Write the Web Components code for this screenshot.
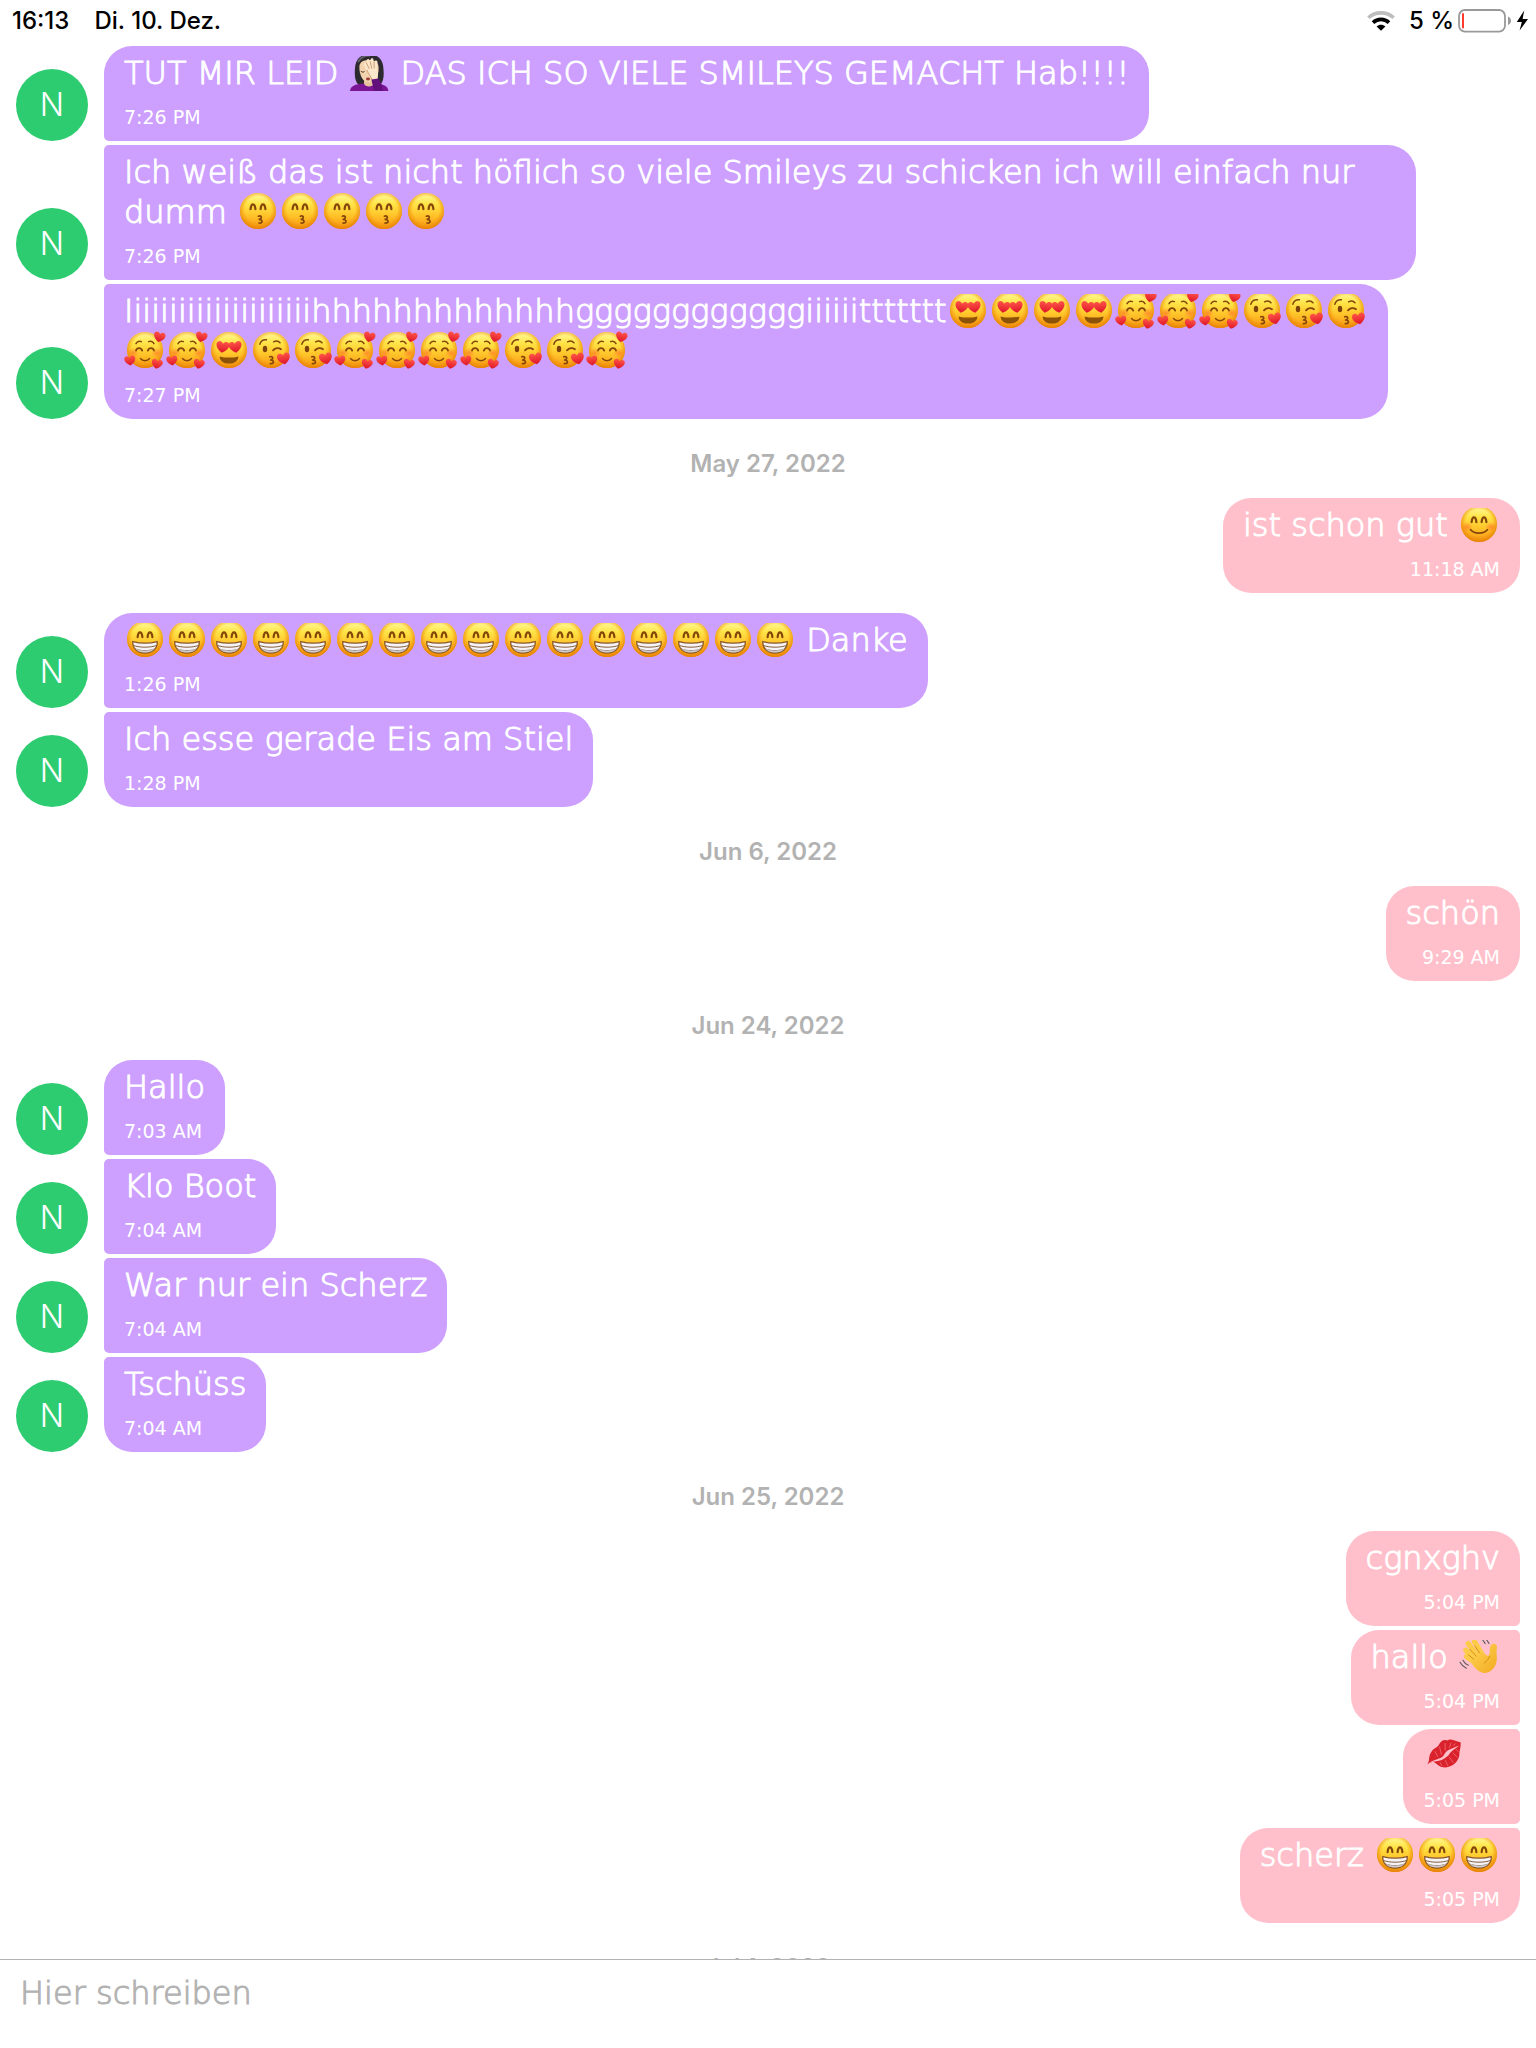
<!DOCTYPE html>
<html lang="de">
<head>
<meta charset="utf-8">
<meta name="viewport" content="width=device-width, initial-scale=1">
<title>Chat</title>
<style>
  body { margin: 0; background: #fff; }
</style>
</head>
<body>
<chat-app></chat-app>

<script>
const FACE = `
  <defs>
    <linearGradient id="g" x1="0" y1="0" x2="0" y2="1">
      <stop offset="0" stop-color="#fffba0"/><stop offset=".3" stop-color="#ffe548"/>
      <stop offset=".62" stop-color="#ffc42a"/><stop offset="1" stop-color="#f79412"/>
    </linearGradient>
    <radialGradient id="r" cx=".5" cy=".46" r=".54">
      <stop offset=".66" stop-color="#f59a10" stop-opacity="0"/><stop offset="1" stop-color="#e58006" stop-opacity=".95"/>
    </radialGradient>
    <radialGradient id="c"><stop offset="0" stop-color="#ff6a2a" stop-opacity=".6"/><stop offset="1" stop-color="#ff6a2a" stop-opacity="0"/></radialGradient>
    <linearGradient id="h" x1="0" y1="0" x2="0" y2="1"><stop offset="0" stop-color="#ff5548"/><stop offset="1" stop-color="#dd1428"/></linearGradient>
  </defs>
  <circle cx="21" cy="18" r="18" fill="url(#g)"/><circle cx="21" cy="18" r="18" fill="url(#r)"/>`;
const line = (d, w = 2.2) => `<path d="${d}" fill="none" stroke="#84460a" stroke-width="${w}" stroke-linecap="round" stroke-linejoin="round"/>`;
const heart = (x, y, s, a = 0) =>
  `<path transform="translate(${x} ${y}) rotate(${a}) scale(${s})" fill="url(#h)" d="M0 5.4C-4 3-6 .6-6-2-6-5.6-1.6-6.4 0-3 1.6-6.4 6-5.6 6-2 6 .6 4 3 0 5.4Z"/>`;
const CHEEKS = `<ellipse cx="9" cy="21" rx="6" ry="5" fill="url(#c)"/><ellipse cx="33" cy="21" rx="6" ry="5" fill="url(#c)"/>`;
const ARCS = line('M13.6 16.2C14.2 9.8 17.8 9.8 18.4 16.2') + line('M23.6 16.2C24.2 9.8 27.8 9.8 28.4 16.2');
const KISS = line('M21.4 23.2C24.6 22 25.6 25.6 22.2 26.4 26 26.4 26 30.6 22 30', 1.7);

const EMOJI = {
  grin: ['😁', FACE + ARCS +
    `<path d="M8.8 20.6C16 22.4 26 22.4 33.2 20.6 33.8 27 28.6 32 21 32S8.2 27 8.8 20.6Z" fill="#f4f3f7" stroke="#8a5522" stroke-width="1.3"/>
     <path d="M9.2 24.4C16 26.8 26 26.8 32.8 24.4M11.4 28C17 30.2 25 30.2 30.6 28" fill="none" stroke="#8a5f3c" stroke-width="1"/>
     <path d="M11.2 27.6C16 30 26 30 30.8 27.6 28.6 30.6 25.4 31.6 21 31.6S13.4 30.6 11.2 27.6Z" fill="#c9c8ce" opacity=".8"/>`],
  blush: ['😊', FACE + CHEEKS + ARCS + line('M12.6 23.8C16 28.2 26 28.2 29.4 23.8', 1.8)],
  kissing: ['😙', FACE + ARCS + KISS],
  hearteyes: ['😍', FACE + heart(14.6, 15, 1.08, 8) + heart(27.4, 15, 1.08, -8) +
    `<path d="M11.6 24.4C17 26 25 26 30.4 24.4 30.4 28.6 26.4 31.6 21 31.6S11.6 28.6 11.6 24.4Z" fill="#8c5208"/>`],
  loving: ['🥰', FACE + CHEEKS + line('M12 18.6C13 15.4 17 15.4 18.2 18.6', 1.8) + line('M23.8 18.6C25 15.4 29 15.4 30 18.6', 1.8) +
    line('M12 11.6C13 9.6 15.4 9 17.4 9.6', 1.5) + line('M24.6 9.6C26.6 9 29 9.6 30 11.6', 1.5) + line('M16.6 26.6C18.6 29.4 23.4 29.4 25.4 26.6', 1.6) +
    heart(35.4, 5, .96, 14) + heart(6, 28.6, .92, -8) + heart(33, 32, .92, 12)],
  kissheart: ['😘', FACE + `<ellipse cx="15" cy="17" rx="2.2" ry="3.3" fill="#7c430a"/>` +
    line('M9.8 12.2C11 8.6 13.6 7.4 16.4 7.8', 1.5) + line('M23.6 9.8C26 8.6 28.6 9 30 10.8', 1.5) + line('M23 18.4C25.2 15.8 28.6 15.6 31 17.2', 1.8) +
    `<g transform="translate(-1.6 1.6)">${KISS}</g>` + heart(33.8, 26.6, 1.08, -12)],
  wave: ['👋', `
    <defs><linearGradient id="w" x1="0" y1="0" x2="1" y2="1"><stop offset="0" stop-color="#ffd75a"/><stop offset="1" stop-color="#f3a91e"/></linearGradient></defs>
    <g fill="none" stroke="#fccb48" stroke-width="5.2" stroke-linecap="round">
      <path d="M24 16 16.4 3.6"/><path d="M21 20 10.2 5.6"/><path d="M19 23 7.6 12.2"/><path d="M19 26 8.6 18.6"/>
    </g>
    <path d="M25.6 14.6C30 20 31.6 18 31.8 13 31.8 9.4 32.4 6 35.6 5.8 38.4 5.8 39.4 8 38.8 11 37.8 15.4 39.8 19.6 38.2 25 36.6 31 30.6 36 24.8 34.8 19.4 33.6 14.2 27.4 12.4 22.6L18 14Z" fill="url(#w)"/>
    <path d="M21.6 15 16.6 7.6M18.4 18.4 11.6 11M16 21.4 10 16.6M31.8 18C30.8 21 28.6 22 26.4 25.6" fill="none" stroke="#d88f14" stroke-width="1"/>
    <path d="M24 .8 27.2 5.6M27.4 0 31 5.4M2 24.2C3.6 27.2 5.6 29 8.4 30.2M5 22.2C6 24.4 8 26.4 10.4 27.2" fill="none" stroke="#5c5c62" stroke-width="1.1" stroke-linecap="round"/>`],
  lips: ['💋', `
    <path d="M4 27.4C7.6 23 4.6 20 8.6 14.4 12 10 14 11.4 16 7.6 17.6 3.6 21.6 1.8 24.4 3.6 27 .8 31.6 4 37.6 5.2 38.2 11 36 13.6 36.4 18 35.4 25 29 30 22.6 30.4 17 30.6 14.8 27.6 11.4 25.2 8.8 24.4 6.6 26 4 27.4Z" fill="#d9222c"/>
    <path d="M4.6 27C10 22.6 14 22.6 18.4 20.4 21.6 19 21 15.6 25 13.2 28.6 11.6 33 9.4 36.4 8.4 32.6 11.4 29.6 13 27.2 15.8 25.2 19.6 22.6 20.6 19.6 22.6 16 24.8 11.4 23.4 4.6 27Z" fill="#ffc0cb"/>
    <path d="M12 14.6 14.8 19.6M16.6 10 18.4 17.4M22 6.4 22.2 13.2M28 6.2 26.4 10.6M32 6.8 30.8 8.8M17 25.4 19 28.6M22.4 23.6 24.6 28.4M26.4 20.2 30.2 25.4M30 16 34 20M33 12.4 35 14.4" fill="none" stroke="#ee6670" stroke-width=".9" stroke-linecap="round"/>`],
  facepalm: ['🤦🏻‍♀️', `
    <path d="M11 31C6 28 6.4 17 7.4 11 8.8 3.6 14 .4 21 .4S33.6 3.6 35 11C36 18 36.6 27 32 31Z" fill="#2c2a2f"/>
    <path d="M10 8C13 3 17 1.4 22 1.6" fill="none" stroke="#66626a" stroke-width="2"/>
    <path d="M2 37C2.6 31.6 8 30.6 14 29.6L28 29.4C35 30.4 40 31.4 40.4 37Z" fill="#7c1496"/>
    <path d="M16 24H26V29.6C25 33.4 17 33.4 16 29.6Z" fill="#e6c19c"/>
    <path d="M11.4 12C12 8 15 6 21 6S30 8 30.6 13C31 22 27 28.4 21 28.4S11 21.4 11.4 12Z" fill="#f3d3ae"/>
    <path d="M12.8 17.2C14.4 18.4 15.6 18.4 16.6 17.4" fill="none" stroke="#4a3226" stroke-width="1"/>
    <ellipse cx="20" cy="25" rx="2" ry="1.4" fill="#a13a34"/>
    <path d="M17 10 20 16M20 6.6 22.4 15M24 5.8 25 14.6M28 8 27.6 15" fill="none" stroke="#fae6ca" stroke-width="3" stroke-linecap="round"/>
    <path d="M18.6 14C21 13 27 13 29 14.4 31 18 29.6 25 29 29L24 28C24 23 19 20 18.6 14Z" fill="#fae6ca"/>
    <path d="M18.4 9 21.4 15M22.2 7.6 23.8 14.6M26 7.6 26.2 14.4M19 16C20 20 23.4 22.4 24 26" fill="none" stroke="#c8966c" stroke-width=".9"/>
    <path d="M23.4 25.6 30.6 24.6C33 29 35 32 35 37H25.6C25.6 33 24 29 23.4 25.6Z" fill="#63107c"/>`]
};

customElements.define('emoji-icon', class extends HTMLElement {
  connectedCallback() {
    const [label, art] = EMOJI[this.getAttribute('name')];
    this.attachShadow({ mode: 'open' }).innerHTML = `
      <style>
        :host { display: inline-block; width: 42px; height: 36px; vertical-align: -6px; line-height: 0; }
        svg { display: block; width: 42px; height: 36px; overflow: visible; }
      </style>
      <svg viewBox="0 0 42 36" role="img" aria-label="${label}">${art}</svg>`;
  }
});

customElements.define('status-bar', class extends HTMLElement {
  connectedCallback() {
    this.attachShadow({ mode: 'open' }).innerHTML = `
      <style>
        :host { display: flex; justify-content: space-between; align-items: center; padding: 0 7px 4px 12px;
                box-sizing: border-box; height: 46px; font: 500 24px/30px Inter, sans-serif; color: #000; }
        div { display: flex; align-items: center; }
        .left { gap: 25px; }
        .battery { margin-left: 4px; }
        .wifi { margin-right: 14px; }
        svg { display: block; }
      </style>
      <div class="left"><time>16:13</time><span>Di. 10. Dez.</span></div>
      <div>
        <svg class="wifi" width="28" height="20" viewBox="0 0 28 20" aria-hidden="true">
          <path d="M1.4 6.8C8.4.2 19.6.2 26.6 6.8" fill="none" stroke="#bdbdbd" stroke-width="3.6"/>
          <path d="M6 11.6C10.6 7.4 17.4 7.4 22 11.6" fill="none" stroke="#000" stroke-width="3.8"/>
          <path d="M9.6 15.4C12.2 13.2 15.8 13.2 18.4 15.4L14 19.8Z" fill="#000"/>
        </svg>
        <span>5 %</span>
        <svg class="battery" width="71" height="24" viewBox="0 0 71 24" aria-hidden="true">
          <rect x="1" y="1" width="46" height="21.6" rx="6" fill="none" stroke="#999" stroke-width="1.8"/>
          <rect x="4" y="4" width="2" height="15.6" rx="1" fill="#ff3b30"/>
          <path d="M50 7.6C52 8.4 53 10 53 11.8S52 15.2 50 16Z" fill="#999"/>
          <path d="M66.2 1.4 58.8 13H63.8L61.6 21.6 70 10H64.6Z" fill="#000"/>
        </svg>
      </div>`;
  }
});

customElements.define('user-avatar', class extends HTMLElement {
  connectedCallback() {
    this.attachShadow({ mode: 'open' }).innerHTML = `
      <style>
        :host { display: flex; flex: none; align-items: center; justify-content: center; width: 72px; height: 72px;
                border-radius: 50%; background: #2ecc71; color: #fff; font: 300 32px/40px Inter, sans-serif; }
      </style>
      <slot></slot>`;
  }
});

customElements.define('chat-message', class extends HTMLElement {
  connectedCallback() {
    const mine = this.hasAttribute('mine');
    this.attachShadow({ mode: 'open' }).innerHTML = `
      <style>
        :host { display: flex; align-items: flex-end; gap: 16px; padding: 0 16px; }
        :host([mine]) { justify-content: flex-end; }
        .bubble { box-sizing: border-box; max-width: 1312px; padding: 7px 20px 12px; color: #fff; background: #cd9fff;
                  border-radius: var(--tl, 5px) 28px 28px var(--bl, 5px);
                  font: 200 32px/40px "Chalkboard SE", "DejaVu Sans", sans-serif; -webkit-text-stroke: 1px #fff; }
        :host([mine]) .bubble { background: #ffc0cb; border-radius: 28px var(--tl, 5px) var(--bl, 5px) 28px; }
        :host([first]) .bubble { --tl: 28px; }
        :host([last]) .bubble { --bl: 28px; }
        p { margin: 0 0 12px; clip-path: inset(3px -20px 0 -20px); }
        time { display: block; font-size: 19px; line-height: 24px; -webkit-text-stroke: 0; font-weight: 400; }
        :host([mine]) time { text-align: right; }
      </style>
      ${mine ? '' : '<user-avatar>N</user-avatar>'}
      <div class="bubble"><p><slot></slot></p><time>${this.getAttribute('time')}</time></div>`;
  }

  // Shrinks a bubble with wrapped content to its longest line.
  hug() {
    const range = document.createRange();
    range.selectNodeContents(this);
    const rects = [...range.getClientRects()];
    const width = Math.max(...rects.map(r => r.right)) - Math.min(...rects.map(r => r.left));
    this.shadowRoot.querySelector('.bubble').style.width = Math.ceil(width) + 41 + 'px';
  }
});

customElements.define('date-divider', class extends HTMLElement {
  connectedCallback() {
    this.attachShadow({ mode: 'open' }).innerHTML = `
      <style>
        :host { display: block; padding: 26px 0 19px; text-align: center; color: #b2b2b2; font: 600 24px/30px Inter, sans-serif; }
      </style>
      <slot></slot>`;
  }
});

customElements.define('message-group', class extends HTMLElement {
  connectedCallback() {
    this.attachShadow({ mode: 'open' }).innerHTML = `
      <style>
        :host { display: flex; flex-direction: column; gap: 4px; padding-bottom: 4px; }
        :host([spaced]) { padding-bottom: 20px; }
      </style>
      <slot></slot>`;
  }
});

customElements.define('message-composer', class extends HTMLElement {
  connectedCallback() {
    this.attachShadow({ mode: 'open' }).innerHTML = `
      <style>
        :host { display: block; flex: none; box-sizing: border-box; border-top: 1px solid #b2b2b2; background: #fff; padding: 13px 20px 35px; }
        input { display: block; box-sizing: border-box; width: 100%; height: 40px; padding: 0; border: 0; outline: 0; background: none; color: #000;
                font: 200 32px/40px "Chalkboard SE", "DejaVu Sans", sans-serif; }
        input::placeholder { color: #b2b2b2; opacity: 1; -webkit-text-stroke: 1px #b2b2b2; }
      </style>
      <input type="text" aria-label="Nachricht" placeholder="Hier schreiben">`;
  }
});

const e = (name, n = 1) => `<emoji-icon name="${name}"></emoji-icon>`.repeat(n);
const shout = 'I' + 'i'.repeat(20) + 'h'.repeat(13) + 'g'.repeat(12) + 'i'.repeat(6) + 't'.repeat(7);

customElements.define('chat-app', class extends HTMLElement {
  connectedCallback() {
    this.attachShadow({ mode: 'open' }).innerHTML = `
      <style>
        :host { display: flex; flex-direction: column; height: 100vh; background: #fff; }
        main { flex: 1; min-height: 0; overflow: hidden; }
      </style>
      <status-bar></status-bar>
      <main>
        <message-group>
          <chat-message first time="7:26 PM">TUT MIR LEID ${e('facepalm')} DAS ICH SO VIELE SMILEYS GEMACHT Hab!!!!</chat-message>
          <chat-message time="7:26 PM">Ich weiß das ist nicht höflich so viele Smileys zu schicken ich will einfach nur dumm ${e('kissing', 5)}</chat-message>
          <chat-message last hug time="7:27 PM">${shout}${e('hearteyes', 4)}${e('loving', 3)}${e('kissheart', 3)}${e('loving', 2)}${e('hearteyes')}${e('kissheart', 2)}${e('loving', 4)}${e('kissheart', 2)}${e('loving')}</chat-message>
        </message-group>
        <date-divider>May 27, 2022</date-divider>
        <message-group spaced>
          <chat-message mine first last time="11:18 AM">ist schon gut ${e('blush')}</chat-message>
        </message-group>
        <message-group>
          <chat-message first time="1:26 PM">${e('grin', 16)} Danke</chat-message>
          <chat-message last time="1:28 PM">Ich esse gerade Eis am Stiel</chat-message>
        </message-group>
        <date-divider>Jun 6, 2022</date-divider>
        <message-group>
          <chat-message mine first last time="9:29 AM">schön</chat-message>
        </message-group>
        <date-divider>Jun 24, 2022</date-divider>
        <message-group>
          <chat-message first time="7:03 AM">Hallo</chat-message>
          <chat-message time="7:04 AM">Klo Boot</chat-message>
          <chat-message time="7:04 AM">War nur ein Scherz</chat-message>
          <chat-message last time="7:04 AM">Tschüss</chat-message>
        </message-group>
        <date-divider>Jun 25, 2022</date-divider>
        <message-group>
          <chat-message mine first time="5:04 PM">cgnxghv</chat-message>
          <chat-message mine time="5:04 PM">hallo ${e('wave')}</chat-message>
          <chat-message mine time="5:05 PM">${e('lips')}</chat-message>
          <chat-message mine last time="5:05 PM">scherz ${e('grin', 3)}</chat-message>
        </message-group>
        <date-divider>Jul 1, 2022</date-divider>
      </main>
      <message-composer></message-composer>`;
    this.shadowRoot.querySelectorAll('chat-message[hug]').forEach(m => m.hug());
  }
});
</script>
</body>
</html>
